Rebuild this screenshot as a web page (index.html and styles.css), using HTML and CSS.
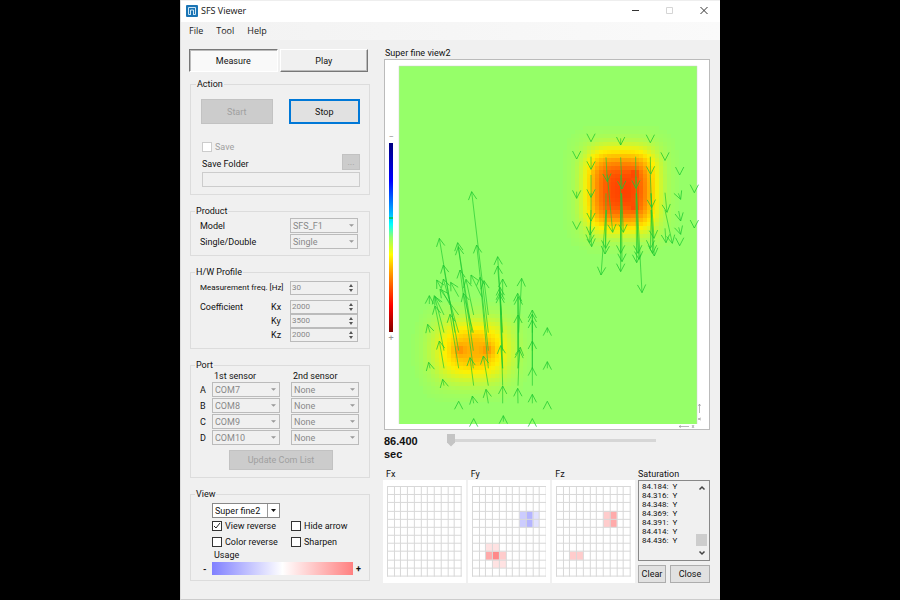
FILE: index.html
```html
<!DOCTYPE html>
<html lang="en">
<head>
    <meta charset="UTF-8">
    <meta name="viewport" content="width=device-width, initial-scale=1.0">
    <title>SFS Viewer</title>
    <link rel="stylesheet" href="styles.css">
</head>
<body>
    <div class="window">
        <header class="titlebar">
            <svg class="app-icon" width="12" height="12" viewBox="0 0 12 12">
                <rect width="12" height="12" rx="1" fill="#1b75b5"/>
                <path d="M4 9.500H2.500V2.500h7v7H8M4.500 10V5h3v5" fill="none" stroke="#cfe6f5"/>
            </svg>
            <h1>SFS Viewer</h1>
            <div class="window-buttons">
                <button type="button" aria-label="Minimize"><svg width="10" height="10" viewBox="0 0 10 10"><path d="M1 4.500h7" stroke="#333"/></svg></button>
                <button type="button" aria-label="Maximize" disabled><svg width="10" height="10" viewBox="0 0 10 10"><path d="M1.500 1.500h6v6h-6z" fill="none" stroke="#d5d5d5"/></svg></button>
                <button type="button" aria-label="Close window"><svg width="10" height="10" viewBox="0 0 10 10"><path d="M1.500 1l7 7M8.500 1l-7 7" stroke="#333"/></svg></button>
            </div>
        </header>
        <nav class="menu">
            <a href="#">File</a>
            <a href="#">Tool</a>
            <a href="#">Help</a>
        </nav>

        <main class="content">
            <form class="settings">
                <div class="tabs">
                    <button type="button" class="tab active">Measure</button>
                    <button type="button" class="tab">Play</button>
                </div>

                <fieldset class="action">
                    <legend>Action</legend>
                    <div class="action-buttons">
                        <button type="button" class="btn" disabled>Start</button>
                        <button type="button" class="btn focused">Stop</button>
                    </div>
                    <label class="check off"><input type="checkbox" disabled>Save</label>
                    <div class="folder-row">
                        <label for="folder">Save Folder</label>
                        <button type="button" class="btn browse" disabled>...</button>
                    </div>
                    <input type="text" id="folder" class="folder" disabled>
                </fieldset>

                <fieldset class="product">
                    <legend>Product</legend>
                    <label for="model">Model</label>
                    <select id="model" disabled><option>SFS_F1</option></select>
                    <label for="single">Single/Double</label>
                    <select id="single" disabled><option>Single</option></select>
                </fieldset>

                <fieldset class="profile">
                    <legend>H/W Profile</legend>
                    <div class="field freq">
                        <label for="freq">Measurement freq. [Hz]</label>
                        <span class="spin"><input type="number" id="freq" value="30" disabled></span>
                    </div>
                    <div class="field">
                        <span>Coefficient</span>
                        <label for="kx">Kx</label>
                        <span class="spin"><input type="number" id="kx" value="2000" disabled></span>
                    </div>
                    <div class="field">
                        <label for="ky">Ky</label>
                        <span class="spin"><input type="number" id="ky" value="3500" disabled></span>
                    </div>
                    <div class="field">
                        <label for="kz">Kz</label>
                        <span class="spin"><input type="number" id="kz" value="2000" disabled></span>
                    </div>
                </fieldset>

                <fieldset class="port">
                    <legend>Port</legend>
                    <div class="ports">
                        <span class="head first" id="sensor1">1st sensor</span>
                        <span class="head" id="sensor2">2nd sensor</span>
                        <label for="a1">A</label>
                        <select id="a1" disabled><option>COM7</option></select>
                        <select aria-labelledby="sensor2" disabled><option>None</option></select>
                        <label for="b1">B</label>
                        <select id="b1" disabled><option>COM8</option></select>
                        <select aria-labelledby="sensor2" disabled><option>None</option></select>
                        <label for="c1">C</label>
                        <select id="c1" disabled><option>COM9</option></select>
                        <select aria-labelledby="sensor2" disabled><option>None</option></select>
                        <label for="d1">D</label>
                        <select id="d1" disabled><option>COM10</option></select>
                        <select aria-labelledby="sensor2" disabled><option>None</option></select>
                    </div>
                    <button type="button" class="btn update" disabled>Update Com List</button>
                </fieldset>

                <fieldset class="view">
                    <legend>View</legend>
                    <select class="view-mode" aria-label="View mode"><option>Super fine2</option></select>
                    <div class="checks">
                        <label class="check"><input type="checkbox" checked>View reverse</label>
                        <label class="check"><input type="checkbox">Hide arrow</label>
                        <label class="check"><input type="checkbox">Color reverse</label>
                        <label class="check"><input type="checkbox">Sharpen</label>
                    </div>
                    <div class="usage-label">Usage</div>
                    <div class="usage"><b>-</b><div class="usage-bar"></div><b>+</b></div>
                </fieldset>
            </form>

            <section class="display">
                <h2>Super fine view2</h2>
                <div class="plot">
                    <div class="scale">
                        <span>−</span>
                        <div class="scale-bar"></div>
                        <span>+</span>
                    </div>
                    <svg class="map" id="map" viewBox="0 0 298 358"></svg>
                    <svg class="axes" width="26" height="26" viewBox="0 0 26 26" fill="none" stroke="#999">
                        <path d="M1 23.500h10M1 23.500l2-1M1 23.500l2 1M14 22l2 3M16 22l-2 3M21.500 1v9M21.500 1l-1 2M21.500 1l1 2M20 16l3-1M20 16l3 1" stroke-width=".7"/>
                    </svg>
                </div>

                <div class="timeline">
                    <label for="time">86.400 sec</label>
                    <input type="range" id="time" min="0" max="100" value="0">
                </div>

                <div class="bottom">
                    <figure>
                        <figcaption>Fx</figcaption>
                        <div class="card"><svg id="fx" viewBox="0 0 75 91"></svg></div>
                    </figure>
                    <figure>
                        <figcaption>Fy</figcaption>
                        <div class="card"><svg id="fy" viewBox="0 0 75 91"></svg></div>
                    </figure>
                    <figure>
                        <figcaption>Fz</figcaption>
                        <div class="card"><svg id="fz" viewBox="0 0 75 91"></svg></div>
                    </figure>
                    <div class="saturation">
                        <h2>Saturation</h2>
                        <div class="log">
                            <ul>
                                <li>84.184: &nbsp;Y</li>
                                <li>84.316: &nbsp;Y</li>
                                <li>84.348: &nbsp;Y</li>
                                <li>84.369: &nbsp;Y</li>
                                <li>84.391: &nbsp;Y</li>
                                <li>84.414: &nbsp;Y</li>
                                <li>84.436: &nbsp;Y</li>
                            </ul>
                            <div class="scrollbar">
                                <svg width="8" height="8" viewBox="0 0 8 8"><path d="M1.500 5.500L4 3l2.500 2.500" fill="none" stroke="#444" stroke-width="1.500"/></svg>
                                <div class="thumb"></div>
                                <svg width="8" height="8" viewBox="0 0 8 8"><path d="M1.500 2.500L4 5l2.500-2.500" fill="none" stroke="#444" stroke-width="1.500"/></svg>
                            </div>
                        </div>
                        <div class="log-buttons">
                            <button type="button" class="btn">Clear</button>
                            <button type="button" class="btn">Close</button>
                        </div>
                    </div>
                </div>
            </section>
        </main>
    </div>
    <script src="script.js"></script>
</body>
</html>
```
FILE: styles.css
```css
* {
    box-sizing: border-box;
}

body {
    margin: 0;
    background-color: #000;
    color: #111;
    font-family: Roboto, "Liberation Sans", sans-serif;
    font-size: 9px;
    line-height: 12px;
}

.window {
    width: 60%;
    min-width: 540px;
    min-height: 100vh;
    margin: 0 auto;
    background-color: #f0f0f0;
    border-left: 1px solid #ddd;
    border-bottom: 1px solid #ccc;
}

button, input, select {
    font: inherit;
    color: inherit;
    margin: 0;
}

h1, h2 {
    margin: 0;
    font-size: 9px;
    font-weight: normal;
}

/* title bar and menu */
.titlebar {
    display: flex;
    align-items: center;
    height: 22px;
    padding: 0 11px 1px 5px;
    gap: 3px;
    background-color: #fff;
    border-top: 1px solid #eee;
    font-family: "Open Sans", sans-serif;
}

.window-buttons {
    display: flex;
    gap: 24px;
    margin-left: auto;
}

.window-buttons button {
    padding: 0;
    border: none;
    background: none;
    line-height: 0;
}

.menu {
    display: flex;
    align-items: center;
    gap: 13px;
    height: 18px;
    padding-left: 8px;
    background: linear-gradient(to right, #f2f2f2, #fafafa);
    font-family: "Open Sans", sans-serif;
}

.menu a {
    color: #222;
    text-decoration: none;
}

.content {
    display: grid;
    grid-template-columns: 181px 1fr;
    gap: 12px;
    padding: 8px 10px 16px 8px;
}

/* left side */
.settings {
    display: flex;
    flex-direction: column;
    gap: 10px;
}

.tabs {
    display: flex;
    gap: 2px;
    padding-right: 2px;
    margin: 1px 0 -4px;
}

.tab {
    flex: 1;
    height: 23px;
    padding: 0;
    background-color: #f0f0f0;
    border: 1px solid #fff;
    border-right-color: #777;
    border-bottom-color: #777;
    box-shadow: inset -1px -1px #bbb;
}

.tab.active {
    background-color: #f9f9f9;
    border: 1px solid #fff;
    border-top-color: #777;
    border-left-color: #777;
    box-shadow: inset 1px 1px #bbb;
}

fieldset {
    min-width: 0;
    margin: 0 0 0 1px;
    padding: 0;
    border: 1px solid #dcdcdc;
}

legend {
    margin-left: -5px;
    padding: 0 1px;
    line-height: 12px;
}

.btn {
    height: 20px;
    padding: 0;
    background-color: #e1e1e1;
    border: 1px solid #adadad;
}

.btn:disabled {
    color: #a0a0a0;
    background-color: #ccc;
    border-color: #c2c2c2;
}

.btn.focused {
    border: 2px solid #0078d7;
}

fieldset.action {
    padding: 9px 9px 7px 10px;
}

.action-buttons {
    display: grid;
    grid-template-columns: 1fr 1fr;
    gap: 16px;
    margin-bottom: 17px;
}

.action-buttons .btn {
    height: 25px;
}

.check {
    display: flex;
    align-items: center;
    gap: 3px;
    height: 12px;
}

.check.off {
    color: #a0a0a0;
    margin-left: 1px;
}

.check input {
    appearance: none;
    width: 10px;
    height: 10px;
    border: 1px solid #333;
    background: #fff;
}

.check input:disabled {
    border-color: #ccc;
}

.check input:checked {
    background: #fff url("data:image/svg+xml,%3Csvg xmlns='http://www.w3.org/2000/svg' viewBox='0 0 8 8'%3E%3Cpath d='M1 4l2 2 4-5' fill='none' stroke='%23222'/%3E%3C/svg%3E") center / 8px 8px no-repeat;
}

.folder-row {
    display: flex;
    justify-content: space-between;
    align-items: flex-end;
    margin: 1px 0 2px 1px;
}

.browse {
    width: 18px;
    height: 16px;
}

.folder {
    display: block;
    width: calc(100% - 1px);
    height: 15px;
    margin-left: 1px;
    border: 1px solid #ccc;
    background-color: #f0f0f0;
}

select {
    appearance: none;
    width: 68px;
    height: 15px;
    padding: 0 2px;
    border: 1px solid #999;
    border-radius: 0;
    background: #fff url("data:image/svg+xml,%3Csvg xmlns='http://www.w3.org/2000/svg' viewBox='0 0 6 4'%3E%3Cpath d='M0 0h6L3 3z' fill='%23222'/%3E%3C/svg%3E") right 3px center / 5px 4px no-repeat;
}

select:disabled {
    color: #888;
    opacity: 1;
    border-color: #bbb;
    background-color: #f0f0f0;
    background-image: url("data:image/svg+xml,%3Csvg xmlns='http://www.w3.org/2000/svg' viewBox='0 0 6 4'%3E%3Cpath d='M0 0h6L3 3z' fill='%23999'/%3E%3C/svg%3E");
}

.product {
    display: grid;
    grid-template-columns: 1fr 68px;
    row-gap: 1px;
    align-items: center;
    padding: 1px 11px 6px 9px;
}

.profile {
    padding: 3px 11px 6px 9px;
}

.field {
    display: flex;
    justify-content: flex-end;
    align-items: center;
}

.field span:first-child {
    margin-right: auto;
}

.field label {
    width: 19px;
}

.field.freq {
    margin-bottom: 5px;
}

.field.freq label {
    flex: 1;
    min-width: 0;
    font-size: 8px;
    white-space: nowrap;
}

.spin {
    flex: none;
    width: 68px;
    height: 14px;
    border: 1px solid #bbb;
    background: url("data:image/svg+xml,%3Csvg xmlns='http://www.w3.org/2000/svg' viewBox='0 0 6 10'%3E%3Cpath d='M1 4l2-3 2 3zM1 6l2 3 2-3z' fill='%23555'/%3E%3C/svg%3E") right 3px center / 6px 10px no-repeat;
}

.spin input {
    display: block;
    width: 54px;
    height: 11px;
    padding: 0 1px;
    border: none;
    background: none;
    color: #888;
    font-size: 8px;
    appearance: textfield;
}

.spin input::-webkit-inner-spin-button {
    display: none;
}

.port {
    padding: 0 11px 7px 9px;
}

.ports {
    display: grid;
    grid-template-columns: 1fr 68px 68px;
    column-gap: 11px;
    row-gap: 1px;
    align-items: center;
}

.ports .head {
    padding-left: 2px;
    line-height: 10px;
}

.ports .first {
    grid-column: 2;
}

.ports label {
    width: 12px;
    margin-right: -11px;
}

.update {
    display: block;
    width: 104px;
    margin: 5px 0 0 29px;
}

.view {
    padding: 3px 11px 5px 9px;
}

.view-mode {
    display: block;
    margin: 0 0 2px 12px;
    border-color: #888;
    background-image: url("data:image/svg+xml,%3Csvg xmlns='http://www.w3.org/2000/svg' viewBox='0 0 12 13'%3E%3Cpath d='M.5 0v13' stroke='%23999'/%3E%3Cpath d='M4 5h5l-2.500 3z' fill='%23111'/%3E%3C/svg%3E");
    background-position: right 0 center;
    background-size: 12px 13px;
}

.checks {
    display: grid;
    grid-template-columns: 79px 1fr;
    row-gap: 4px;
    margin: 0 -8px 0 12px;
    white-space: nowrap;
}

.usage-label {
    margin-left: 14px;
    line-height: 14px;
}

.usage {
    display: grid;
    grid-template-columns: 12px 1fr 8px;
    align-items: center;
    margin-right: -3px;
}

.usage b {
    padding-left: 3px;
}

.usage-bar {
    height: 13px;
    background: linear-gradient(to right, #8080ff, #fff 50%, #ff8080);
}

/* right side */
.display {
    min-width: 0;
}

.display h2 {
    line-height: 10px;
    padding-left: 3px;
}

.plot {
    position: relative;
    display: grid;
    grid-template-columns: 14px 1fr 12px;
    margin: 1px 0 0 2px;
    padding: 6px 0 5px;
    background-color: #fff;
    border: 1px solid #bbb;
}

.map {
    width: 100%;
    height: auto;
    overflow: visible;
}

.axes {
    position: absolute;
    right: 5px;
    bottom: 0;
}

.scale {
    display: flex;
    flex-direction: column;
    align-items: center;
    padding: 65px 2px 80px 0;
    color: #999;
}

.scale-bar {
    position: relative;
    flex: 1;
    width: 4px;
    background: linear-gradient(#000080, #0000ff 20%, #00bfff 38%, #00ffff 43%, #96ff69 50%, #ffff00 59%, #ff9000 70%, #ff0000 86%, #800000);
}

.scale-bar::after {
    content: "";
    position: absolute;
    top: 39%;
    width: 4px;
    height: 2px;
    background-color: #00c878;
}

.timeline {
    display: flex;
    align-items: flex-start;
    margin: 5px 0 7px 2px;
}

.timeline label {
    width: 59px;
    padding-right: 16px;
    font-family: "Liberation Sans", Arial, sans-serif;
    font-size: 11px;
    line-height: 13px;
    font-weight: bold;
}

.timeline input {
    appearance: none;
    flex: none;
    width: calc(100% - 117px);
    height: 8px;
    margin: 1px 0 0 4px;
    background: linear-gradient(#d6d6d6, #d6d6d6) center / 100% 3px no-repeat;
}

.timeline input::-webkit-slider-thumb {
    appearance: none;
    width: 8px;
    height: 13px;
    background-color: #c4c4c4;
    clip-path: polygon(0 0, 100% 0, 100% 70%, 50% 100%, 0 70%);
}

.bottom {
    display: grid;
    grid-template-columns: 1fr 1fr 1fr 73px;
    gap: 2px;
    margin-left: 1px;
}

figure {
    margin: 0;
}

figcaption {
    padding-left: 3px;
}

.card {
    padding: 6px 4px;
    background-color: #fff;
}

.card svg {
    display: block;
    width: 100%;
}

.saturation {
    display: flex;
    flex-direction: column;
    padding-left: 1px;
}

.saturation h2 {
    line-height: 12px;
    padding-left: 0;
}

.log {
    flex: 1;
    display: flex;
    justify-content: space-between;
    border: 1px solid #888;
}

.log ul {
    margin: 1px 0 0 3px;
    padding: 0;
    list-style: none;
    font-size: 8px;
    line-height: 9px;
}

.scrollbar {
    display: flex;
    flex-direction: column;
    align-items: center;
    width: 14px;
    padding: 3px 0;
}

.thumb {
    width: 11px;
    height: 12px;
    margin: auto 0 3px;
    background-color: #cdcdcd;
}

.log-buttons {
    display: grid;
    grid-template-columns: 28px 1fr;
    gap: 4px;
    margin-top: 4px;
}

.log-buttons .btn {
    height: 18px;
}
```
FILE: script.js
```javascript
const SVG_NS = 'http://www.w3.org/2000/svg';

function add(parent, tag, attrs) {
    const el = document.createElementNS(SVG_NS, tag);
    for (const key in attrs) {
        el.setAttribute(key, attrs[key]);
    }
    parent.appendChild(el);
    return el;
}

// value -> colour, from background green up to dark red
const stops = [
    [0, 150, 255, 105],
    [0.3, 255, 240, 0],
    [0.6, 255, 150, 0],
    [0.9, 255, 65, 0],
    [1, 215, 20, 0]
];

function heatColor(v) {
    v = Math.min(Math.max(v, 0), 1);
    for (let i = 1; i < stops.length; i++) {
        if (v <= stops[i][0]) {
            const a = stops[i - 1];
            const b = stops[i];
            const t = (v - a[0]) / (b[0] - a[0]);
            const mix = n => Math.round(a[n] + (b[n] - a[n]) * t);
            return `rgb(${mix(1)},${mix(2)},${mix(3)})`;
        }
    }
}

function spot(x, y, cx, cy, r) {
    return Math.exp(-((x - cx) ** 2 + (y - cy) ** 2) / (r * r));
}

function pressure(x, y) {
    const right = Math.exp(-(Math.abs((x - 222) / 33) ** 3.4) - Math.abs((y - 124) / 38) ** 3.4);
    const halo = Math.exp(-(((x - 222) / 49) ** 4) - ((y - 123) / 54) ** 4);
    const left = Math.exp(-(Math.abs((x - 74) / 34) ** 2.4) - Math.abs((y - 284) / 26) ** 2.4);
    const leftHalo = Math.exp(-(((x - 72) / 44) ** 4) - ((y - 286) / 42) ** 4);
    return right * 0.77 + halo * 0.07 + left * 0.44 + leftHalo * 0.07
        + 0.06 * spot(x, y, 230, 124, 22)
        + 0.11 * spot(x, y, 236, 107, 4) + 0.11 * spot(x, y, 236, 142, 4)
        + 0.16 * spot(x, y, 60, 284, 6) + 0.16 * spot(x, y, 89, 284, 6);
}

const map = document.getElementById('map');
add(map, 'rect', { width: 298, height: 358, fill: heatColor(0) });
const cells = add(map, 'g', { 'shape-rendering': 'crispEdges' });
const cell = 4;
for (let y = 0; y < 358; y += cell) {
    for (let x = 0; x < 298; x += cell) {
        const v = pressure(x + cell / 2, y + cell / 2);
        if (v > 0.01) {
            add(cells, 'rect', { x: x, y: y, width: cell, height: cell, fill: heatColor(v) });
        }
    }
}
add(map, 'path', { d: 'M0 358V0H298V358', fill: 'none', stroke: '#ccc', 'stroke-width': 0.5 });

// arrows: tail x, tail y, head x, head y, three steps to one map unit
const upArrows = [
    [325, 308, 275, -115], [225, 308, 178, 25], [280, 362, 233, 38], [276, 308, 235, 50],
    [280, 415, 240, 120], [236, 362, 190, 105], [325, 362, 290, 45], [305, 200, 273, 135],
    [325, 415, 300, 142], [325, 255, 312, 152], [281, 255, 258, 148], [236, 200, 212, 157],
    [210, 225, 170, 150], [236, 308, 190, 147], [236, 255, 180, 178], [148, 222, 148, 197],
    [192, 308, 163, 197], [192, 362, 165, 228], [192, 255, 165, 200], [236, 415, 210, 253],
    [280, 308, 250, 190], [192, 415, 178, 333], [281, 467, 270, 383], [325, 467, 310, 378],
    [368, 308, 353, 80], [364, 255, 353, 108], [368, 200, 368, 147], [368, 362, 360, 172],
    [368, 415, 360, 185], [368, 467, 360, 195], [368, 415, 362, 347], [368, 520, 368, 468],
    [416, 308, 425, 145], [414, 415, 413, 190], [416, 362, 415, 200], [414, 362, 414, 255],
    [414, 415, 421, 352], [414, 520, 413, 475], [414, 467, 418, 360], [457, 415, 457, 240],
    [457, 362, 457, 252], [457, 308, 457, 270], [457, 415, 457, 333], [457, 467, 457, 413],
    [457, 520, 457, 493], [457, 568, 457, 566], [502, 308, 502, 293], [502, 415, 502, 395],
    [502, 515, 502, 514], [150, 308, 143, 283], [150, 415, 146, 397], [192, 467, 188, 448],
    [236, 515, 236, 514], [281, 520, 277, 498], [281, 568, 281, 566], [325, 520, 318, 478],
    [370, 575, 370, 557]
];
const downArrows = [
    [153, 94, 153, 95], [242, 85, 242, 105], [331, 97, 331, 98], [110, 146, 110, 147],
    [153, 140, 153, 178], [198, 142, 202, 215], [242, 142, 246, 237], [287, 140, 288, 235],
    [331, 140, 332, 193], [375, 150, 375, 151], [419, 194, 419, 195], [463, 247, 463, 248],
    [110, 245, 110, 265], [153, 195, 153, 262], [110, 357, 110, 358], [153, 250, 153, 333],
    [153, 330, 150, 375], [153, 300, 149, 398], [151, 350, 155, 410], [202, 195, 218, 367],
    [198, 250, 197, 415], [200, 300, 195, 432], [198, 300, 183, 495], [245, 250, 250, 367],
    [242, 195, 242, 430], [244, 250, 246, 455], [242, 300, 242, 485], [288, 200, 294, 430],
    [288, 250, 290, 458], [290, 300, 297, 448], [290, 250, 306, 548], [331, 195, 335, 293],
    [333, 250, 342, 385], [334, 300, 331, 415], [333, 250, 338, 430], [333, 300, 343, 438],
    [375, 248, 381, 307], [375, 300, 397, 400], [375, 355, 378, 398], [415, 250, 422, 268],
    [416, 303, 422, 333], [416, 352, 422, 373], [419, 406, 419, 407], [463, 353, 463, 354]
];

function drawArrows(list, dx, dy) {
    const g = add(map, 'g', { fill: 'none', stroke: '#1ec832', 'stroke-width': 0.9 });
    list.forEach(([x1, y1, x2, y2]) => {
        const tx = x1 / 3 + dx;
        const ty = y1 / 3 + dy;
        const hx = x2 / 3 + dx;
        const hy = y2 / 3 + dy;
        const angle = Math.atan2(ty - hy, tx - hx);
        const wing = side => {
            const a = angle + side * 0.48;
            return `${hx + 9 * Math.cos(a)} ${hy + 9 * Math.sin(a)}`;
        };
        add(g, 'path', { d: `M${tx} ${ty}L${hx} ${hy}`, opacity: 0.75 });
        add(g, 'path', { d: `M${wing(1)}L${hx} ${hy}L${wing(-1)}`, opacity: 0.85 });
    });
}

drawArrows(upArrows, -19, 164);
drawArrows(downArrows, 141, 44);

// small sensor grids, 11 x 11 taxels: column, row, colour
function drawGrid(id, values) {
    const svg = document.getElementById(id);
    const w = 74 / 11;
    const h = 90 / 11;
    values.forEach(([col, row, fill]) => {
        add(svg, 'rect', { x: col * w + 0.5, y: row * h + 0.5, width: w, height: h, fill: fill });
    });
    let d = '';
    for (let i = 0; i <= 11; i++) {
        d += `M${Math.round(i * w) + 0.5} 0V91M0 ${Math.round(i * h) + 0.5}H75`;
    }
    add(svg, 'path', { d: d, stroke: '#d8d8d8', fill: 'none' });
}

drawGrid('fx', []);
drawGrid('fy', [
    [7, 3, '#ccccff'], [8, 3, '#b4b4ff'], [9, 3, '#e2e2ff'],
    [7, 4, '#ccccff'], [8, 4, '#b4b4ff'], [9, 4, '#e2e2ff'],
    [2, 7, '#ffe2e2'], [3, 7, '#ffe2e2'],
    [2, 8, '#ffaaaa'], [3, 8, '#ff8888'], [4, 8, '#ffcccc'],
    [3, 9, '#ffe2e2'], [4, 9, '#ffe2e2']
]);
drawGrid('fz', [
    [7, 3, '#ffcccc'], [8, 3, '#ffaaaa'],
    [7, 4, '#ffcccc'], [8, 4, '#ffaaaa'],
    [2, 8, '#ffcccc'], [3, 8, '#ffcccc']
]);
```
